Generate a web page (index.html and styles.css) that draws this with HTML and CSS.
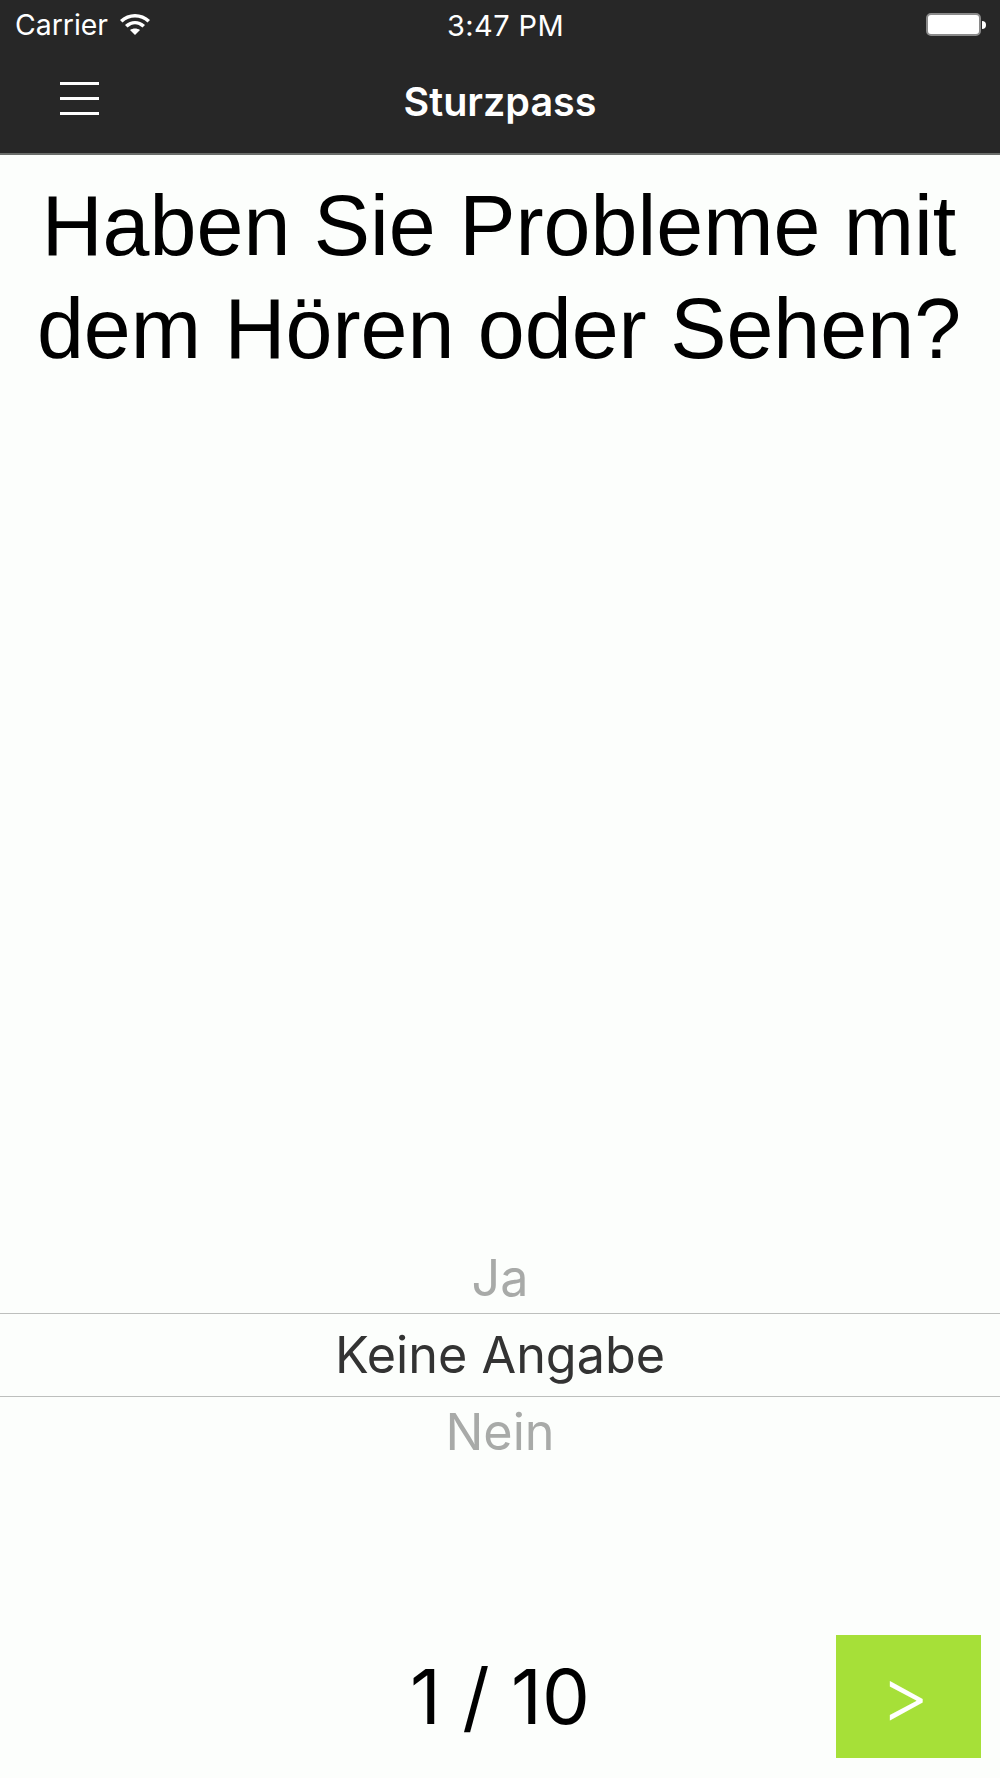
FILE: index.html
```html
<!DOCTYPE html>
<html lang="de">
  <head>
    <meta charset="UTF-8" />
    <meta name="viewport" content="width=device-width, initial-scale=1.0" />
    <title>Sturzpass</title>
    <link rel="stylesheet" href="styles.css">
  </head>
  <body>
    <div class="app">
      <header class="header">
        <div class="status-bar">
          <div class="status-left">
            <span>Carrier</span>
            <svg class="wifi" width="30" height="21" viewBox="0 0 30 21">
              <path d="M0 6 C8 -2 22 -2 30 6 L27.5 8.5 C20.5 1.8 9.5 1.8 2.5 8.5 Z" fill="#fff" />
              <path d="M5 11 C11 5.5 19 5.5 25 11 L22.5 13.5 C17.5 9 12.5 9 7.5 13.5 Z" fill="#fff" />
              <path d="M10 16 C13 14 17 14 20 16 L15 21 Z" fill="#fff" />
            </svg>
          </div>
          <div class="status-time">3:47 PM</div>
          <div class="status-right">
            <div class="battery"></div>
            <div class="battery-tip"></div>
          </div>
        </div>
        <div class="nav-bar">
          <div class="menu-icon">
            <span></span>
            <span></span>
            <span></span>
          </div>
          <div class="nav-title">Sturzpass</div>
        </div>
      </header>

      <main class="content">
        <h1 class="question">Haben Sie Probleme mit dem Hören oder Sehen?</h1>

        <div class="picker">
          <div class="picker-item">Ja</div>
          <div class="picker-item picker-selected">Keine Angabe</div>
          <div class="picker-item">Nein</div>
        </div>

        <div class="footer">
          <div class="counter">1 / 10</div>
          <button class="next-button">&gt;</button>
        </div>
      </main>
    </div>
  </body>
</html>
```

FILE: styles.css
```css
body {
  margin: 0;
  background-color: #fcfefc;
  font-family: Inter, "Liberation Sans", sans-serif;
}
.app {
  display: flex;
  flex-direction: column;
  height: 1778px;
  overflow: hidden;
}
.header {
  height: 155px;
  background-color: #272727;
  border-bottom: 2px solid #6a6d6a;
  box-sizing: border-box;
  color: white;
}
.status-bar {
  display: flex;
  justify-content: space-between;
  align-items: center;
  height: 48px;
  padding: 0 14px 0 15px;
  position: relative;
  font-size: 28.4px;
}
.status-left {
  display: flex;
  align-items: center;
  gap: 12px;
}
.status-time {
  position: absolute;
  left: 447px;
  top: 8px;
  font-size: 29px;
  letter-spacing: 0.4px;
}
.status-right {
  display: flex;
  align-items: center;
  margin-top: 1px;
}
.battery {
  width: 51px;
  height: 19px;
  background-color: white;
  border: 2px solid #8a8a8a;
  border-radius: 5px;
}
.battery-tip {
  width: 4px;
  height: 8px;
  margin-left: 1px;
  background-color: white;
  border-radius: 0 4px 4px 0;
}
.nav-bar {
  display: flex;
  align-items: center;
  justify-content: center;
  height: 105px;
  position: relative;
}
.menu-icon {
  position: absolute;
  left: 60px;
  top: 34px;
  display: flex;
  flex-direction: column;
  gap: 12px;
  width: 39px;
}
.menu-icon span {
  display: block;
  height: 3px;
  background-color: white;
}
.nav-title {
  font-size: 39.5px;
  font-weight: 600;
  margin-top: 2px;
}
.content {
  flex: 1;
  display: flex;
  flex-direction: column;
}
.question {
  margin: 20px 0 0;
  padding: 0 22px 0 20px;
  font-family: "Liberation Sans", Arial, sans-serif;
  font-size: 84.4px;
  font-weight: normal;
  line-height: 103px;
  text-align: center;
  color: black;
}
.picker {
  margin-top: 862px;
  text-align: center;
  font-size: 50.3px;
  color: #a8aaa8;
}
.picker-item {
  height: 70px;
  line-height: 70px;
}
.picker-selected {
  height: 82px;
  line-height: 82px;
  color: #333;
  border-top: 1px solid #bdbfbd;
  border-bottom: 1px solid #bdbfbd;
}
.footer {
  flex: 1;
  display: flex;
  align-items: flex-end;
  justify-content: center;
  position: relative;
  padding-bottom: 32px;
}
.counter {
  font-size: 76px;
  line-height: 100px;
  color: black;
}
.next-button {
  position: absolute;
  right: 19px;
  bottom: 20px;
  width: 145px;
  height: 123px;
  padding: 0 7px 4px 0;
  background-color: #a6e038;
  color: white;
  border: none;
  font-size: 75px;
  font-weight: 300;
  font-family: Inter, sans-serif;
}
```
